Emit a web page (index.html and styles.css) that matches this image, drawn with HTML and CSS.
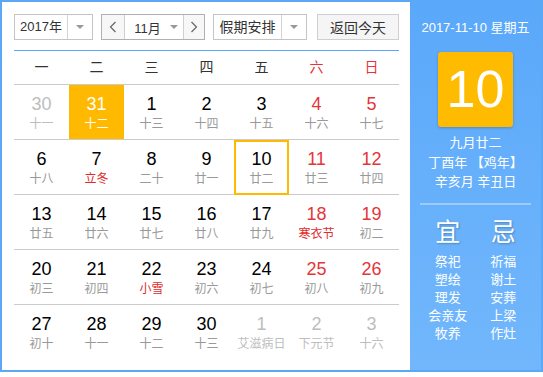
FILE: index.html
```html
<!DOCTYPE html>
<html>
<head>
  <meta charset="UTF-8">
  <title>万年历</title>
  <link rel="stylesheet" href="styles.css">
</head>
<body>
  <div class="calendar">
    <div class="main">
      <div class="toolbar">
        <div class="select year-select">
          <span class="select-text">2017年</span>
          <span class="select-arrow"><i class="tri"></i></span>
        </div>
        <div class="month-group">
          <span class="nav-btn">
            <svg width="8" height="12" viewBox="0 0 8 12"><polyline points="6.5,1 1.5,6 6.5,11" fill="none" stroke="#666" stroke-width="1.2"/></svg>
          </span>
          <span class="month-select">11月<i class="tri"></i></span>
          <span class="nav-btn">
            <svg width="8" height="12" viewBox="0 0 8 12"><polyline points="1.5,1 6.5,6 1.5,11" fill="none" stroke="#666" stroke-width="1.2"/></svg>
          </span>
        </div>
        <div class="select holiday-select">
          <span class="select-text">假期安排</span>
          <span class="select-arrow"><i class="tri"></i></span>
        </div>
        <button class="today-btn">返回今天</button>
      </div>

      <div class="week-head">
        <span>一</span><span>二</span><span>三</span><span>四</span><span>五</span>
        <span class="red">六</span><span class="red">日</span>
      </div>

      <div class="week">
        <div class="day other"><b>30</b><em>十一</em></div>
        <div class="day selected"><b>31</b><em>十二</em></div>
        <div class="day"><b>1</b><em>十三</em></div>
        <div class="day"><b>2</b><em>十四</em></div>
        <div class="day"><b>3</b><em>十五</em></div>
        <div class="day weekend"><b>4</b><em>十六</em></div>
        <div class="day weekend"><b>5</b><em>十七</em></div>
      </div>
      <div class="week">
        <div class="day"><b>6</b><em>十八</em></div>
        <div class="day"><b>7</b><em class="fest">立冬</em></div>
        <div class="day"><b>8</b><em>二十</em></div>
        <div class="day"><b>9</b><em>廿一</em></div>
        <div class="day today"><b>10</b><em>廿二</em></div>
        <div class="day weekend"><b>11</b><em>廿三</em></div>
        <div class="day weekend"><b>12</b><em>廿四</em></div>
      </div>
      <div class="week">
        <div class="day"><b>13</b><em>廿五</em></div>
        <div class="day"><b>14</b><em>廿六</em></div>
        <div class="day"><b>15</b><em>廿七</em></div>
        <div class="day"><b>16</b><em>廿八</em></div>
        <div class="day"><b>17</b><em>廿九</em></div>
        <div class="day weekend"><b>18</b><em class="fest">寒衣节</em></div>
        <div class="day weekend"><b>19</b><em>初二</em></div>
      </div>
      <div class="week">
        <div class="day"><b>20</b><em>初三</em></div>
        <div class="day"><b>21</b><em>初四</em></div>
        <div class="day"><b>22</b><em class="fest">小雪</em></div>
        <div class="day"><b>23</b><em>初六</em></div>
        <div class="day"><b>24</b><em>初七</em></div>
        <div class="day weekend"><b>25</b><em>初八</em></div>
        <div class="day weekend"><b>26</b><em>初九</em></div>
      </div>
      <div class="week last">
        <div class="day"><b>27</b><em>初十</em></div>
        <div class="day"><b>28</b><em>十一</em></div>
        <div class="day"><b>29</b><em>十二</em></div>
        <div class="day"><b>30</b><em>十三</em></div>
        <div class="day other"><b>1</b><em>艾滋病日</em></div>
        <div class="day other"><b>2</b><em>下元节</em></div>
        <div class="day other"><b>3</b><em>十六</em></div>
      </div>
    </div>

    <div class="side">
      <div class="side-date">2017-11-10 星期五</div>
      <div class="big-day">10</div>
      <div class="lunar-info">
        <p>九月廿二</p>
        <p>丁酉年 【鸡年】</p>
        <p>辛亥月 辛丑日</p>
      </div>
      <div class="almanac">
        <div class="alm-col">
          <div class="alm-title">宜</div>
          <p>祭祀</p>
          <p>塑绘</p>
          <p>理发</p>
          <p>会亲友</p>
          <p>牧养</p>
        </div>
        <div class="alm-col">
          <div class="alm-title">忌</div>
          <p>祈福</p>
          <p>谢土</p>
          <p>安葬</p>
          <p>上梁</p>
          <p>作灶</p>
        </div>
      </div>
    </div>
  </div>
</body>
</html>
```

FILE: styles.css
```css
body {
  margin: 0;
  padding: 0;
  background-color: white;
  font-family: "Liberation Sans", Arial, "Noto Sans CJK SC", sans-serif;
  color: #333;
}

.calendar {
  display: flex;
  width: 543px;
  height: 372px;
  box-sizing: border-box;
  border: 2px solid #5aa8f6;
}

/* Left part: toolbar + month grid */
.main {
  width: 408px;
  box-sizing: border-box;
  padding: 12px 11px 0 12px;
}

.toolbar {
  display: flex;
  height: 26px;
  margin-bottom: 10px;
}

.select {
  display: flex;
  height: 26px;
  box-sizing: border-box;
  border: 1px solid #c4c4c4;
  background-color: white;
  font-size: 13px;
}

.select-text {
  flex: 1;
  text-align: center;
  line-height: 24px;
}

.select-arrow {
  width: 24px;
  border-left: 1px solid #d4d4d4;
  display: flex;
  align-items: center;
  justify-content: center;
}

.tri {
  display: inline-block;
  width: 0;
  height: 0;
  border-left: 4px solid transparent;
  border-right: 4px solid transparent;
  border-top: 4px solid #999;
}

.year-select {
  width: 79px;
}

.holiday-select {
  width: 94px;
  margin-left: 8px;
  font-size: 14px;
}

.month-group {
  display: flex;
  width: 104px;
  height: 26px;
  box-sizing: border-box;
  border: 1px solid #b0b0b0;
  margin-left: 8px;
}

.nav-btn {
  width: 22px;
  background-color: #f7f7f7;
  display: flex;
  align-items: center;
  justify-content: center;
}

.nav-btn:first-child {
  border-right: 1px solid #d0d0d0;
}

.nav-btn:last-child {
  border-left: 1px solid #d0d0d0;
  width: 20px;
}

.month-select {
  flex: 1;
  display: flex;
  align-items: center;
  justify-content: center;
  gap: 9px;
  font-size: 13px;
  padding-left: 4px;
}

.today-btn {
  width: 82px;
  height: 26px;
  margin-left: 10px;
  border: 1px solid #cfcfcf;
  background-color: #f5f5f5;
  color: #333;
  font-family: inherit;
  font-size: 14px;
  padding: 0;
}

.week-head {
  display: grid;
  grid-template-columns: repeat(7, 55px);
  height: 33px;
  line-height: 33px;
  border-top: 1px solid #5aa8f6;
  border-bottom: 1px solid #cbcbcb;
  text-align: center;
  font-size: 14px;
  color: #333;
}

.red {
  color: #e5353a;
}

.week {
  display: grid;
  grid-template-columns: repeat(7, 55px);
  border-bottom: 1px solid #cbcbcb;
}

.week.last {
  border-bottom: none;
}

.day {
  height: 54px;
  box-sizing: border-box;
  padding-top: 9px;
  text-align: center;
  position: relative;
}

.day b {
  display: block;
  font-weight: normal;
  font-size: 18px;
  line-height: 20px;
  color: #000;
}

.day em {
  display: block;
  font-style: normal;
  font-size: 12px;
  line-height: 16px;
  margin-top: 2px;
  color: #999;
  white-space: nowrap;
}

.day.weekend b {
  color: #e5353a;
}

.day em.fest {
  color: #e02b2b;
}

.day.other b {
  color: #bdbdbd;
}

.day.other em {
  color: #bdbdbd;
}

.day.selected {
  background-color: #ffb900;
}

.day.selected b,
.day.selected em {
  color: white;
}

.day.today::after {
  content: "";
  position: absolute;
  left: 0;
  right: 0;
  top: 0;
  bottom: -1px;
  border: 2px solid #ffb900;
}

/* Right side panel */
.side {
  flex: 1;
  background: linear-gradient(#5aa8fa, #72b7fc);
  color: white;
  text-align: center;
  padding: 0 10px;
}

.side-date {
  font-size: 13px;
  line-height: 16px;
  margin-top: 18px;
}

.big-day {
  width: 75px;
  height: 75px;
  margin: 16px auto 0;
  background-color: #ffbb00;
  border-radius: 3px;
  box-shadow: 0 1px 3px rgba(0, 0, 0, 0.2);
  font-size: 52px;
  line-height: 75px;
}

.lunar-info {
  margin-top: 6px;
  padding-bottom: 11px;
  border-bottom: 2px solid rgba(255, 255, 255, 0.35);
}

.lunar-info p {
  margin: 0;
  font-size: 13px;
  line-height: 19.5px;
}

.almanac {
  display: flex;
  padding-top: 12px;
}

.alm-col {
  flex: 1;
}

.alm-title {
  font-size: 25px;
  line-height: 30px;
  margin-bottom: 6px;
  text-shadow: 1px 1px 2px rgba(0, 0, 0, 0.25);
}

.alm-col p {
  margin: 0;
  font-size: 13px;
  line-height: 18px;
}
```
